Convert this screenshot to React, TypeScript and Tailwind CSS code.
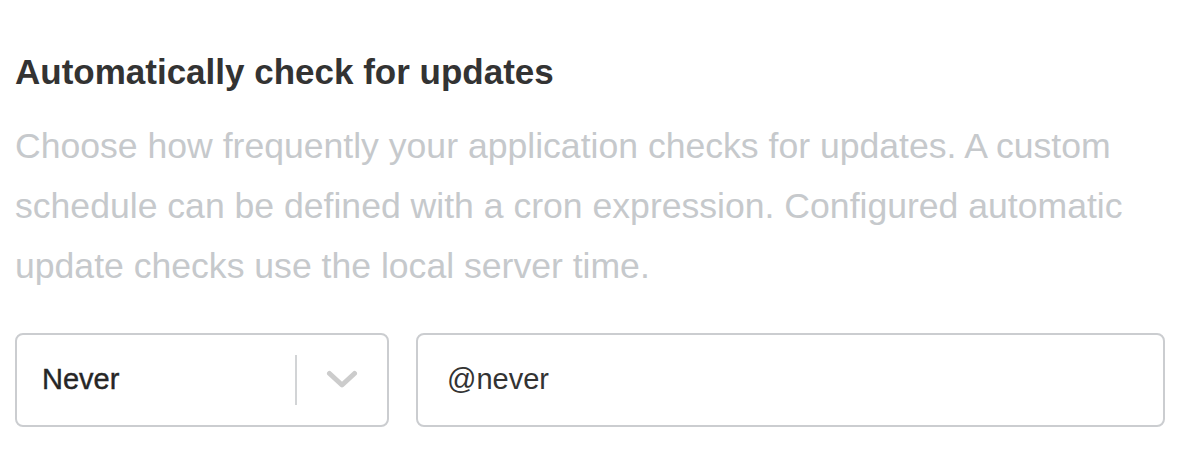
export default function App() {
  return (
    <div className="h-[458px] w-[1200px] bg-white px-[15px] pt-[52px] font-[family-name:'Liberation_Sans',Arial,sans-serif]">
      <h2 className="text-[35px] font-bold leading-[40px] text-[#333333]">Automatically check for updates</h2>
      <p className="mt-[24px] w-[1140px] text-[35.6px] leading-[60px] text-[#c6c9cc]">
        Choose how frequently your application checks for updates. A custom schedule can be defined with a cron
        expression. Configured automatic update checks use the local server time.
      </p>
      <div className="mt-[37px] flex gap-[27px] pr-[20px]">
        <div className="flex h-[94px] w-[374px] items-center rounded-[8px] border-2 border-[#cbcdd0] pl-[25px]">
          <span className="flex-1 text-[29px] text-[#262626] [-webkit-text-stroke:0.4px_#262626]">Never</span>
          <span className="h-[50px] w-[2px] bg-[#d2d4d6]" />
          <span className="flex w-[90px] justify-center">
            <svg width="32" height="20" viewBox="0 0 32 20" fill="none">
              <path d="M3.5 3.5L16 15L28.5 3.5" stroke="#cccccc" strokeWidth="5" strokeLinecap="round" strokeLinejoin="round" />
            </svg>
          </span>
        </div>
        <div className="flex h-[94px] flex-1 items-center rounded-[8px] border-2 border-[#cbcdd0] pl-[29px]">
          <span className="text-[29px] text-[#333333]">@never</span>
        </div>
      </div>
    </div>
  );
}
